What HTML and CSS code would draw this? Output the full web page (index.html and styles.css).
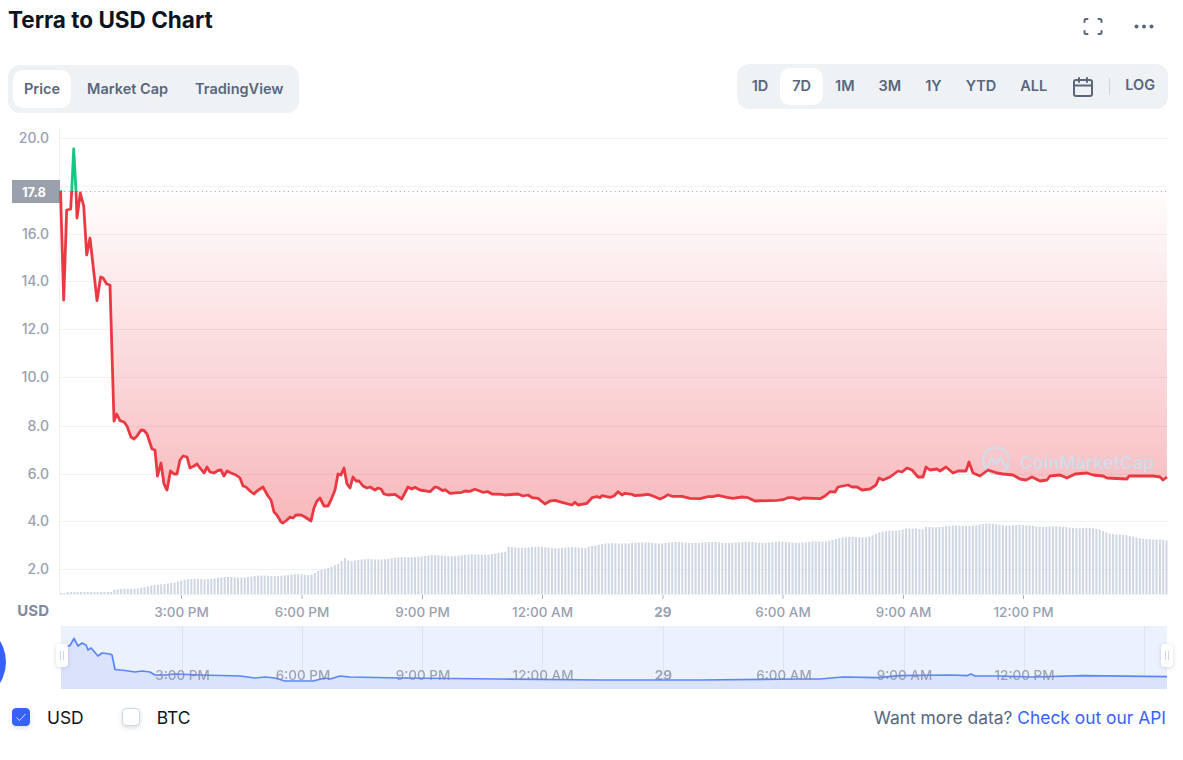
FILE: index.html
```html
<!DOCTYPE html>
<html lang="en">
<head>
<meta charset="utf-8">
<title>Terra to USD Chart</title>
<link rel="stylesheet" href="styles.css">
</head>
<body>
<main class="page">
  <header class="head">
    <h2 class="title">Terra to USD Chart</h2>
    <div class="head-icons">
      <svg class="icon" width="24" height="24" viewBox="0 0 24 24" fill="none" stroke="#58667e" stroke-width="2" stroke-linecap="round" stroke-linejoin="round"><path d="M3.500 7V5.500A1.500 1.500 0 0 1 5 4H6.500M17.500 4H19A1.500 1.500 0 0 1 20.500 5.500V7M20.500 16v1.500A1.500 1.500 0 0 1 19 19H17.500M6.500 19H5A1.500 1.500 0 0 1 3.500 17.500V16"/></svg>
      <svg class="icon" width="24" height="24" viewBox="0 0 24 24" fill="#58667e"><circle cx="4.500" cy="11.500" r="2"/><circle cx="12" cy="11.500" r="2"/><circle cx="19.500" cy="11.500" r="2"/></svg>
    </div>
  </header>

  <div class="controls">
    <div class="tabs">
      <button class="tab active">Price</button>
      <button class="tab">Market Cap</button>
      <button class="tab">TradingView</button>
    </div>
    <div class="range">
      <button class="rng">1D</button>
      <button class="rng active">7D</button>
      <button class="rng">1M</button>
      <button class="rng">3M</button>
      <button class="rng">1Y</button>
      <button class="rng">YTD</button>
      <button class="rng">ALL</button>
      <svg class="cal" width="24" height="24" viewBox="0 0 24 24" fill="none" stroke="#58667e" stroke-width="2" stroke-linecap="round" stroke-linejoin="round"><rect x="3" y="5" width="18" height="16" rx="2"/><path d="M3 10.500h18M8 3v4M16 3v4"/></svg>
      <span class="sep"></span>
      <button class="log">LOG</button>
    </div>
  </div>

  <svg class="chart" width="1183" height="579" viewBox="0 113 1183 579">
    <defs>
      <linearGradient id="redfill" gradientUnits="userSpaceOnUse" x1="0" y1="191" x2="0" y2="523">
        <stop offset="0" stop-color="#ea3943" stop-opacity="0.01"/>
        <stop offset="1" stop-color="#ea3943" stop-opacity="0.36"/>
      </linearGradient>
    </defs>

    <g class="grid">
      <path d="M60 138.500H1168M60 186.500H1168M60 234.500H1168M60 281.500H1168M60 329.500H1168M60 377.500H1168M60 426.500H1168M60 474.500H1168M60 521.500H1168M60 569.500H1168M59.500 127V594M60 594.500H1168"/>
    </g>
    <g class="ticks">
      <path d="M181.500 595v4M302 595v4M422.500 595v4M542.500 595v4M663 595v4M783 595v4M903.500 595v4M1023.500 595v4"/>
    </g>

    <g class="ylabels">
      <text x="49" y="143">20.0</text>
      <text x="49" y="239">16.0</text>
      <text x="49" y="286">14.0</text>
      <text x="49" y="334">12.0</text>
      <text x="49" y="382">10.0</text>
      <text x="49" y="431">8.0</text>
      <text x="49" y="479">6.0</text>
      <text x="49" y="526">4.0</text>
      <text x="49" y="574">2.0</text>
    </g>
    <rect x="12" y="180" width="48" height="23" fill="#9aa0ac"/>
    <text class="price-tag" x="34" y="196.500">17.8</text>

    <g id="bars" class="bars"></g>

    <path class="area" d="M60 191L63.700 300L66.700 210L70.700 209L71.700 191L76 191L77 218L80.300 193L83.700 206L86.700 255L90 238L97 300.700L100.700 277L103 278L106.700 284L110 285L114 421L116.700 414L120 420.700L124 422L127 426L131 437L134 439L137 436L141 430L144 430.500L147 434L150 443L152 449L155 450L157.500 476L161 463L164 484L167 490L170.500 471L174 474L177 474L180 460L183 456L187 457L190 468L194 466L197 464L200 468L204 473L207 467L210 472L214 473L218 470.500L221 470L224 476L227 471L231 473L236 475L240 478L243 486L246 487L250 491L254 494L257 491L263 487L268 496L271 500L274 512L277 515L281 522L283 523L287 520L290 517L293 518L296 515L301 515L305 517L311 521L314 508L317 501L320 498L324 506L328 506L331 500L335 490L338 474L341 475L344 468L347 484L350 488L353 477L356 481L359 481L363 486L367 488L370 487L375 490L378 488L381 489L384 494L388 495L395 494.300L401.700 499L408 487L411.700 489L415 487.300L420 490L430 491.700L435 487L438 487.700L443 490.700L445 489.700L450 493.300L462 492.300L465 491L470 491.300L475 489.300L483 492.300L488 491.700L492 494L502 494.300L505 495L518 494L523 496L528 495L532 497.700L538 498.300L545 504L550 501L555 500.300L562 502.300L572 505L575 502.300L578 505L587 503.300L592 497.700L597 496.700L600 497.700L602 495.700L610 497.300L614 496L618 491.700L622 495L625 493.300L632 494.300L635 495.700L643 495L648 494.300L653 496L660 499L665 496.700L668 494.700L672 496.300L682 496.300L690 498.300L700 498.700L708 496.700L713 496.700L718 495.300L727 497.300L733 498.300L742 497L748 497.700L755 501L777 500.300L783 499.700L788 497.700L793 497.700L799 499.300L803 498L820 498.700L825 496L830 491.700L835 492L838 487L848 485L852 487L857 487L862 490L870 489L876 485L879 478L883 480L890 477L898 471L902 472L907 468L912 470L918 477L923 477L926 467L930 470L937 469L940 471L946 467L953 473L958 471L966 471L969 462L973 473L980 476L988 470L997 473L1003 474L1013 475L1020 479L1026 480L1032 477L1040 481L1047 480L1050 476L1060 475L1067 478L1075 474L1087 473L1093 475L1103 476L1107 478L1127 479L1129 476L1147 476L1153 476L1160 477L1163 480L1167 477L1167 191Z"/>

    <g class="watermark">
      <path class="wm-logo" d="M1008.500 464.500A13 13 0 1 1 1009 459M987 467l5-9 4 7 4-8 3 6c1 3 4 3 6 1"/>
      <text class="wm-text" x="1020" y="468.500">CoinMarketCap</text>
    </g>

    <path class="dots" d="M60 191.500H1168"/>
    <path class="up" d="M60.500 191.500H62M71.700 191L73.700 149L76 191"/>
    <path class="down" d="M60.500 191L63.700 300L66.700 210L70.700 209L71.700 191M76 191L77 218L80.300 193L83.700 206L86.700 255L90 238L97 300.700L100.700 277L103 278L106.700 284L110 285L114 421L116.700 414L120 420.700L124 422L127 426L131 437L134 439L137 436L141 430L144 430.500L147 434L150 443L152 449L155 450L157.500 476L161 463L164 484L167 490L170.500 471L174 474L177 474L180 460L183 456L187 457L190 468L194 466L197 464L200 468L204 473L207 467L210 472L214 473L218 470.500L221 470L224 476L227 471L231 473L236 475L240 478L243 486L246 487L250 491L254 494L257 491L263 487L268 496L271 500L274 512L277 515L281 522L283 523L287 520L290 517L293 518L296 515L301 515L305 517L311 521L314 508L317 501L320 498L324 506L328 506L331 500L335 490L338 474L341 475L344 468L347 484L350 488L353 477L356 481L359 481L363 486L367 488L370 487L375 490L378 488L381 489L384 494L388 495L395 494.300L401.700 499L408 487L411.700 489L415 487.300L420 490L430 491.700L435 487L438 487.700L443 490.700L445 489.700L450 493.300L462 492.300L465 491L470 491.300L475 489.300L483 492.300L488 491.700L492 494L502 494.300L505 495L518 494L523 496L528 495L532 497.700L538 498.300L545 504L550 501L555 500.300L562 502.300L572 505L575 502.300L578 505L587 503.300L592 497.700L597 496.700L600 497.700L602 495.700L610 497.300L614 496L618 491.700L622 495L625 493.300L632 494.300L635 495.700L643 495L648 494.300L653 496L660 499L665 496.700L668 494.700L672 496.300L682 496.300L690 498.300L700 498.700L708 496.700L713 496.700L718 495.300L727 497.300L733 498.300L742 497L748 497.700L755 501L777 500.300L783 499.700L788 497.700L793 497.700L799 499.300L803 498L820 498.700L825 496L830 491.700L835 492L838 487L848 485L852 487L857 487L862 490L870 489L876 485L879 478L883 480L890 477L898 471L902 472L907 468L912 470L918 477L923 477L926 467L930 470L937 469L940 471L946 467L953 473L958 471L966 471L969 462L973 473L980 476L988 470L997 473L1003 474L1013 475L1020 479L1026 480L1032 477L1040 481L1047 480L1050 476L1060 475L1067 478L1075 474L1087 473L1093 475L1103 476L1107 478L1127 479L1129 476L1147 476L1153 476L1160 477L1163 480L1167 477"/>

    <g class="xlabels">
      <text x="181.500" y="617">3:00 PM</text>
      <text x="302" y="617">6:00 PM</text>
      <text x="422.500" y="617">9:00 PM</text>
      <text x="542.500" y="617">12:00 AM</text>
      <text class="day" x="663" y="617">29</text>
      <text x="783" y="617">6:00 AM</text>
      <text x="903.500" y="617">9:00 AM</text>
      <text x="1023.500" y="617">12:00 PM</text>
    </g>
    <text class="unit" x="49" y="615.500">USD</text>

    <circle cx="-34" cy="662" r="40" fill="#3861fb"/>

    <rect x="61" y="626" width="1106" height="63" fill="#ecf1fe"/>
    <path class="mini-area" d="M61 689V647L67 646.500L70 645.500L74 638.500L78 646L82 643L86 645L88 650L91 648L98 656L102 653L110 654L112 655L115 669.500L125 670.500L135 672L142 671L150 672L155 675L165 675L175 674L200 675L240 676L255 678L265 677L275 678L285 681L313 681L325 678L330 679L340 676L350 677L400 678L500 679L600 680L700 680L800 679L820 679L843 677L877 677.700L900 675.700L950 675L967 675.700L971 674L975 676L1000 676L1033 677L1083 675.700L1167 676.700V689Z"/>
    <path class="mini-grid" d="M182.500 626V689M302.500 626V689M422.500 626V689M542.500 626V689M663.500 626V689M783.500 626V689M904.500 626V689M1024.500 626V689M1144.500 626V689"/>
    <path class="mini-line" d="M61 647L67 646.500L70 645.500L74 638.500L78 646L82 643L86 645L88 650L91 648L98 656L102 653L110 654L112 655L115 669.500L125 670.500L135 672L142 671L150 672L155 675L165 675L175 674L200 675L240 676L255 678L265 677L275 678L285 681L313 681L325 678L330 679L340 676L350 677L400 678L500 679L600 680L700 680L800 679L820 679L843 677L877 677.700L900 675.700L950 675L967 675.700L971 674L975 676L1000 676L1033 677L1083 675.700L1167 676.700"/>
    <g class="mini-labels">
      <text x="182.500" y="680">3:00 PM</text>
      <text x="303" y="680">6:00 PM</text>
      <text x="423" y="680">9:00 PM</text>
      <text x="543" y="680">12:00 AM</text>
      <text class="day" x="663.500" y="680">29</text>
      <text x="784" y="680">6:00 AM</text>
      <text x="904.500" y="680">9:00 AM</text>
      <text x="1024.500" y="680">12:00 PM</text>
    </g>

    <g class="handle">
      <rect x="56" y="644" width="12" height="23" rx="4"/>
      <path d="M60.500 651v9M63.500 651v9"/>
    </g>
    <g class="handle">
      <rect x="1161" y="644" width="12" height="23" rx="4"/>
      <path d="M1165.500 651v9M1168.500 651v9"/>
    </g>
  </svg>

  <footer class="foot">
    <div class="checks">
      <label class="check"><span class="box on"><svg width="12" height="12" viewBox="0 0 12 12" fill="none" stroke="#fff" stroke-width="0.800"><path d="M1.500 6.500L4.500 9.500L10.500 3"/></svg></span>USD</label>
      <label class="check"><span class="box"></span>BTC</label>
    </div>
    <p class="more">Want more data? <a href="#">Check out our API</a></p>
  </footer>
</main>
<script src="script.js"></script>
</body>
</html>
```
FILE: styles.css
```css
* { box-sizing: border-box; }
html, body { margin: 0; padding: 0; background: #fff; }
body { font-family: Inter, "Liberation Sans", sans-serif; width: 1183px; height: 760px; overflow: hidden; }
.page { padding: 0 15px 0 8px; }
.head { display: flex; justify-content: space-between; height: 64px; }
.title { margin: 6px 0 0; font-size: 22.500px; line-height: 27px; font-weight: 700; color: #0d1421; }
.head-icons { display: flex; gap: 26.500px; padding: 15px 12.500px 0 0; align-items: flex-start; }
.icon { display: block; }
.controls { display: flex; justify-content: space-between; align-items: flex-start; height: 49px; }
.tabs { display: flex; gap: 2px; margin-top: 1px; padding: 5px; height: 48px; background: #eff2f5; border-radius: 12px; }
.tab, .rng, .log { border: 0; background: none; font: 600 14.500px/1 Inter, "Liberation Sans", sans-serif; color: #58667e; }
.tab { padding: 0 11px; height: 38px; border-radius: 10px; margin-right: 3px; }
.tab:last-child { margin-right: 0; }
.tab.active, .rng.active { background: #fff; }
.range { display: flex; align-items: center; height: 45px; padding: 0 13px 0 3px; background: #eff2f5; border-radius: 12px; }
.rng { height: 37px; padding: 0 12px; border-radius: 10px; }
.cal { margin-left: 12px; display: block; }
.sep { width: 1px; height: 17px; margin: 0 15px 0 14px; background: #cfd6e4; }
.log { padding: 0 0 3px; }
.chart { display: block; margin-left: -8px; }
.grid path { fill: none; stroke: #eff2f5; stroke-width: 1; }
.ticks path { fill: none; stroke: #a6b0c3; stroke-width: 1; }
.ylabels text { font-size: 14px; font-weight: 500; fill: #98a1b2; text-anchor: end; }
.price-tag { font-size: 13px; font-weight: 700; fill: #fff; text-anchor: middle; }
.bars path { fill: none; stroke: #cfd6e4; stroke-width: 2; }
.area { fill: url(#redfill); }
.wm-logo { fill: none; stroke: #d2dbe8; stroke-width: 2.500; stroke-linecap: round; stroke-linejoin: round; }
.wm-text { font-size: 17.800px; font-weight: 600; fill: #d2dbe8; }
.dots { fill: none; stroke: #98a1b2; stroke-width: 1; stroke-dasharray: 1 3.300; }
.up, .down { fill: none; stroke-width: 2.800; stroke-linejoin: round; }
.up { stroke: #16c784; }
.down { stroke: #ea3943; }
.xlabels text { font-size: 13.500px; font-weight: 500; fill: #98a1b2; text-anchor: middle; }
.xlabels .day, .mini-labels .day { font-weight: 700; }
.unit { font-size: 15px; font-weight: 700; fill: #808a9d; text-anchor: end; }
.mini-area { fill: #dbe3fc; }
.mini-grid { fill: none; stroke: #dfe4f3; stroke-width: 1; }
.mini-line { fill: none; stroke: #5b86fb; stroke-width: 1.700; stroke-linejoin: round; }
.mini-labels text { font-size: 13.500px; font-weight: 500; fill: #808a9d; opacity: .75; text-anchor: middle; }
.handle rect { fill: #fff; filter: drop-shadow(0 1px 2px rgba(88,102,126,.25)); }
.handle path { fill: none; stroke: #cfd6e4; stroke-width: 1; }
.foot { display: flex; justify-content: space-between; align-items: center; height: 50px; padding-right: 2px; }
.checks { display: flex; gap: 38px; padding-left: 4px; }
.check { display: flex; align-items: center; gap: 17px; font-size: 17.400px; color: #0d1421; }
.box { display: flex; align-items: center; justify-content: center; width: 18px; height: 18px; border: 1px solid #cfd6e4; border-radius: 4px; background: #fff; box-shadow: 0 2px 5px rgba(88,102,126,.2); }
.box.on { background: #3861fb; border-color: #3861fb; }
.more { margin: 0; font-size: 17.400px; color: #58667e; }
.more a { color: #3861fb; text-decoration: none; }
```
FILE: script.js
```js
var tops = [[60,593],[66,593],[67,592],[112,592],[113,590],[130,589],[143,587],[160,585],[183,580],[200,579],[217,578],[240,577],[265,576],[290,575],[310,574.5],[320,570],[330,568],[340,563],[344,557],[350,561],[360,560],[400,558],[420,556],[460,555.5],[505,553],[507,547],[585,548],[590,545.5],[620,543],[700,542.5],[823,542],[838,538],[867,537],[878,533],[897,530],[907,528],[923,530],[926,527],[957,526],[988,524],[1033,526],[1087,528],[1100,530],[1110,533],[1133,537],[1150,539],[1167,541]];
function topAt(x) {
  for (var i = 1; i < tops.length; i++) {
    if (x <= tops[i][0]) {
      var a = tops[i - 1], b = tops[i];
      return a[1] + (b[1] - a[1]) * (x - a[0]) / (b[0] - a[0]);
    }
  }
  return tops[tops.length - 1][1];
}
var d = "";
for (var x = 61; x < 1168; x += 3.34) {
  var wobble = x < 112 ? 0 : Math.sin(x * 1.7) * 0.6;
  d += "M" + x.toFixed(1) + " 594V" + (topAt(x) + wobble).toFixed(1);
}
var bar = document.createElementNS("http://www.w3.org/2000/svg", "path");
bar.setAttribute("d", d);
document.getElementById("bars").appendChild(bar);
```
